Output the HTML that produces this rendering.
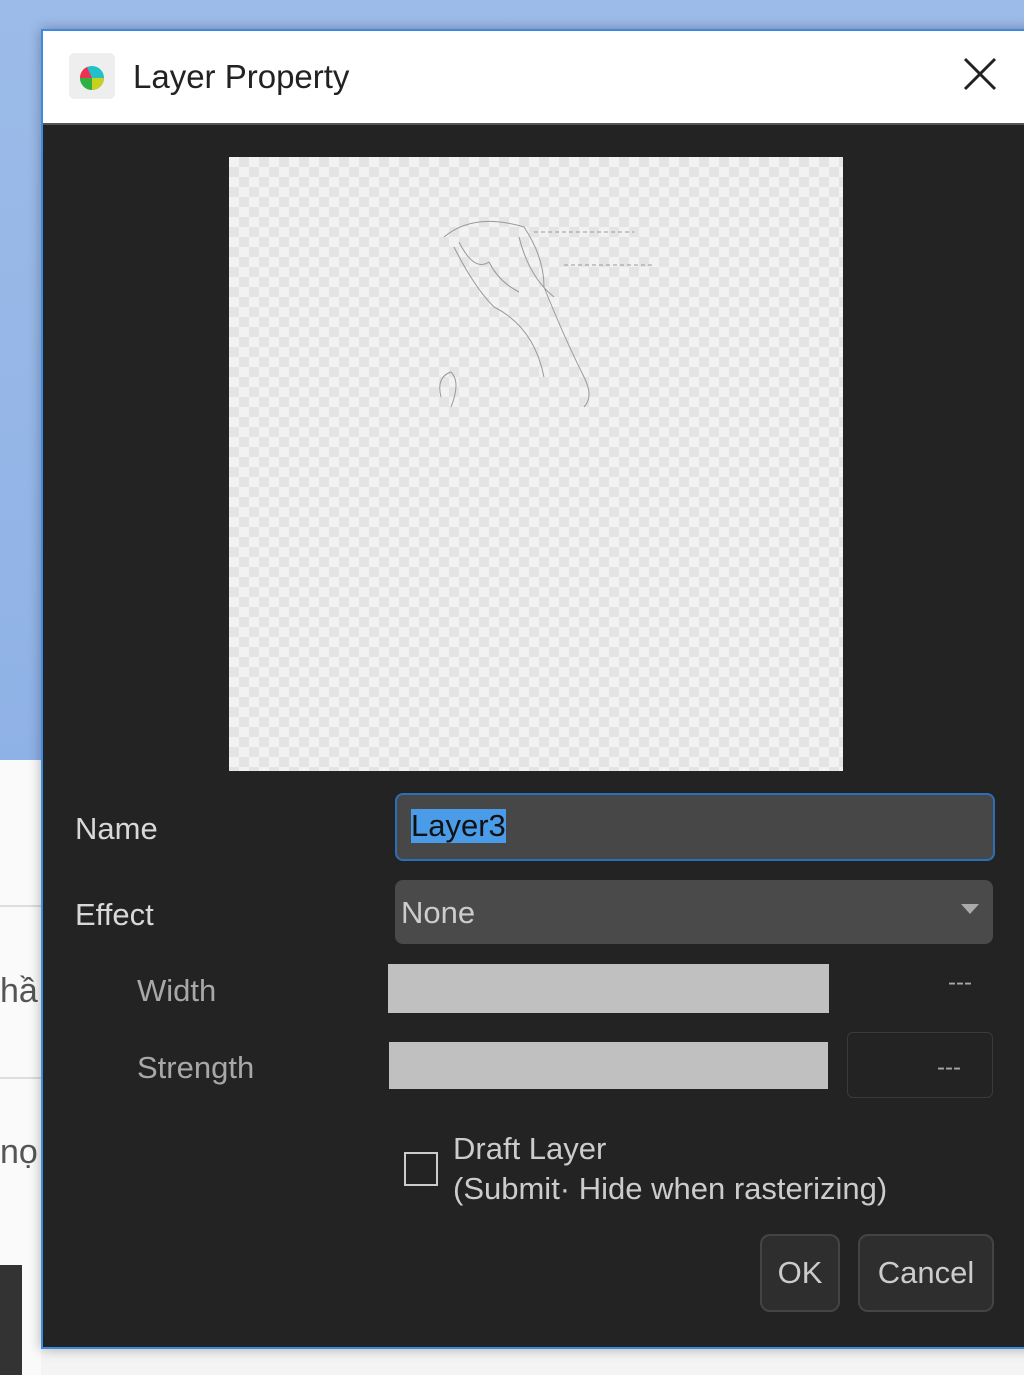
<!DOCTYPE html>
<html><head><meta charset="utf-8"><style>
body{margin:0;width:1024px;height:1375px;position:relative;overflow:hidden;font-family:"Liberation Sans","DejaVu Sans",sans-serif;background:#f4f4f4}
.bgtop{position:absolute;left:0;top:0;width:1024px;height:760px;background:linear-gradient(180deg,#9cbbe8,#8fb2e6)}
.bgleft{position:absolute;left:0;top:760px;width:41px;height:615px;background:#fafafa}
.dlg{position:absolute;left:41px;top:29px;width:990px;height:1316px;border:2px solid #3c8be0;background:#232323;box-shadow:0 0 12px rgba(0,0,0,.3)}
.title{position:absolute;left:0;top:0;right:0;height:92px;background:#fff;border-bottom:2px solid #555}
.title span{position:absolute;left:90px;top:27px;font-size:33px;color:#222}
.icon{position:absolute;left:26px;top:22px;width:46px;height:46px;background:#eee;border-radius:6px}
.prev{position:absolute;left:186px;top:126px;width:614px;height:614px;background-color:#f2f2f2;background-image:linear-gradient(45deg,#e4e4e4 25%,transparent 25%,transparent 75%,#e4e4e4 75%),linear-gradient(45deg,#e4e4e4 25%,transparent 25%,transparent 75%,#e4e4e4 75%);background-size:20px 20px;background-position:0 0,10px 10px}
.lbl{position:absolute;color:#d8d8d8;font-size:31px}
.dim{color:#a8a8a8}
.box{position:absolute;border-radius:8px;background:#4a4a4a}
.bar{position:absolute;background:#c0c0c0}
.btn{position:absolute;top:1203px;height:74px;border-radius:10px;background:#2e2e2e;border:2px solid #444;color:#ccc;font-size:31px;text-align:center;line-height:74px}
.bgt{position:absolute;font-size:34px;color:#555}
</style></head><body>
<div class="bgtop"></div><div class="bgleft"></div>
<div class="bgt" style="left:0;top:972px">hầ</div>
<div class="bgt" style="left:0;top:1133px">nọ</div>
<div style="position:absolute;left:0;top:905px;width:41px;height:2px;background:#ddd"></div>
<div style="position:absolute;left:0;top:1077px;width:41px;height:2px;background:#ddd"></div>
<div style="position:absolute;left:0;top:1265px;width:22px;height:110px;background:#333"></div>
<div class="dlg">
<div class="title"><div class="icon"><svg width="46" height="46"><circle cx="23" cy="25" r="12" fill="#22c0c8"/><path d="M23 25 L11 25 A12 12 0 0 1 18 14Z" fill="#f03050"/><path d="M23 25 L35 25 A12 12 0 0 1 23 37Z" fill="#c8d020"/><path d="M23 25 L23 37 A12 12 0 0 1 11 25Z" fill="#30b040"/></svg></div><span>Layer Property</span>
<svg style="position:absolute;left:920px;top:26px" width="34" height="34"><path d="M2 2L32 32M32 2L2 32" stroke="#222" stroke-width="3"/></svg></div>
<div class="prev"><svg width="614" height="614"><g fill="none" stroke="#999" stroke-width="1"><path d="M215 80 q30-25 80-10 q20 30 20 60 q20 50 40 90 q10 20 0 30 M225 90 q20 40 40 60 q40 20 50 70 M212 240 q-5-20 10-25 q10 10 0 35 M230 85 q15 30 30 20 q10 20 30 30 M290 80 q10 40 35 60"/><path d="M305 75 h100 M335 108 h90" stroke-dasharray="4 3"/></g></svg></div>
<div class="lbl" style="left:32px;top:780px">Name</div>
<div class="box" style="left:352px;top:762px;width:596px;height:64px;border:2px solid #2c6fb8;background:#474747"><span style="position:absolute;left:14px;top:14px;font-size:31px;color:#111;background:#4a9be8;line-height:34px">Layer3</span></div>
<div class="lbl" style="left:32px;top:866px">Effect</div>
<div class="box" style="left:352px;top:849px;width:598px;height:64px"><span style="position:absolute;left:6px;top:15px;font-size:31px;color:#ccc">None</span><span style="position:absolute;right:14px;top:24px;border:9px solid transparent;border-top:10px solid #aaa"></span></div>
<div class="lbl dim" style="left:94px;top:942px">Width</div>
<div class="bar" style="left:345px;top:933px;width:441px;height:49px"></div>
<div class="lbl dim" style="left:905px;top:938px;font-size:24px">---</div>
<div class="lbl dim" style="left:94px;top:1019px">Strength</div>
<div class="bar" style="left:346px;top:1011px;width:439px;height:47px"></div>
<div style="position:absolute;left:804px;top:1001px;width:144px;height:64px;border:1px solid #3a3a3a;border-radius:6px"></div>
<div class="lbl dim" style="left:894px;top:1023px;font-size:24px">---</div>
<div style="position:absolute;left:361px;top:1121px;width:30px;height:30px;border:2px solid #ccc"></div>
<div class="lbl" style="left:410px;top:1098px;line-height:40px;color:#ccc">Draft Layer<br>(Submit· Hide when rasterizing)</div>
<div class="btn" style="left:717px;width:76px">OK</div>
<div class="btn" style="left:815px;width:132px">Cancel</div>
</div>
</body></html>
